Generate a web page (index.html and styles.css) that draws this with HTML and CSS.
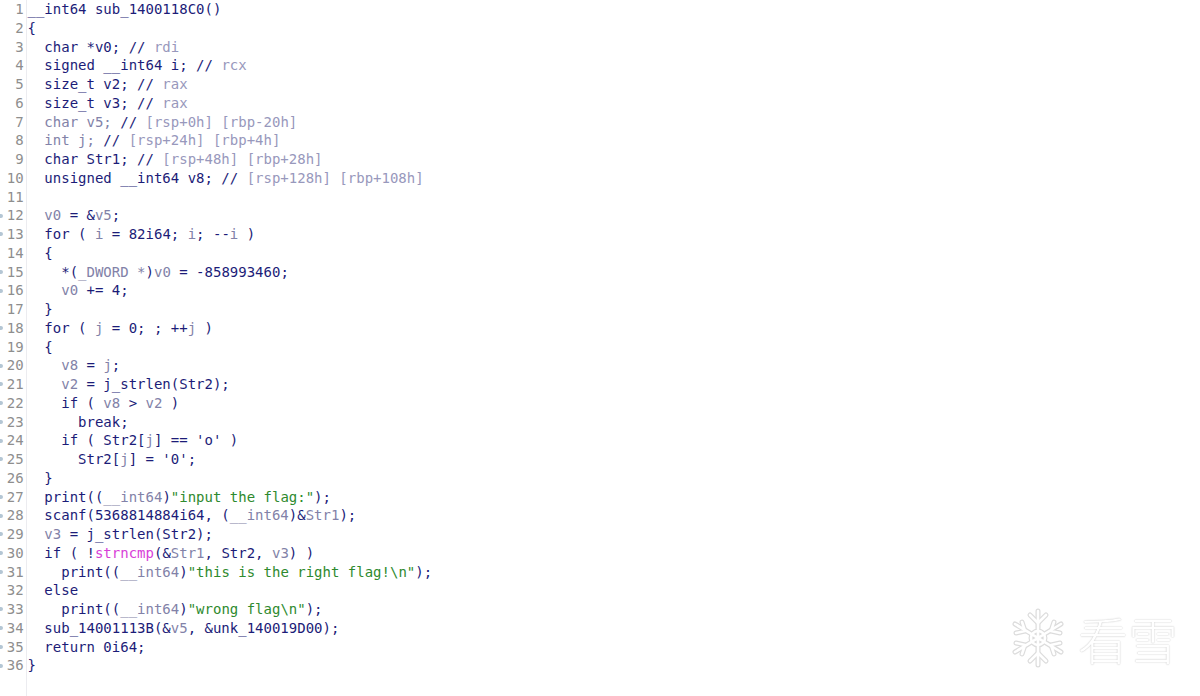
FILE: index.html
```html
<!DOCTYPE html>
<html>
<head>
<meta charset="utf-8">
<link rel="stylesheet" href="styles.css">
</head>
<body>
<div class="editor">
  <div class="gutter">
    <div class="g"><span class="mk"></span><span class="n">1</span></div>
    <div class="g"><span class="mk"></span><span class="n">2</span></div>
    <div class="g"><span class="mk"></span><span class="n">3</span></div>
    <div class="g"><span class="mk"></span><span class="n">4</span></div>
    <div class="g"><span class="mk"></span><span class="n">5</span></div>
    <div class="g"><span class="mk"></span><span class="n">6</span></div>
    <div class="g"><span class="mk"></span><span class="n">7</span></div>
    <div class="g"><span class="mk"></span><span class="n">8</span></div>
    <div class="g"><span class="mk"></span><span class="n">9</span></div>
    <div class="g"><span class="mk"></span><span class="n">10</span></div>
    <div class="g"><span class="mk"></span><span class="n">11</span></div>
    <div class="g"><span class="mk on"></span><span class="n">12</span></div>
    <div class="g"><span class="mk on"></span><span class="n">13</span></div>
    <div class="g"><span class="mk"></span><span class="n">14</span></div>
    <div class="g"><span class="mk on"></span><span class="n">15</span></div>
    <div class="g"><span class="mk on"></span><span class="n">16</span></div>
    <div class="g"><span class="mk"></span><span class="n">17</span></div>
    <div class="g"><span class="mk on"></span><span class="n">18</span></div>
    <div class="g"><span class="mk"></span><span class="n">19</span></div>
    <div class="g"><span class="mk on"></span><span class="n">20</span></div>
    <div class="g"><span class="mk on"></span><span class="n">21</span></div>
    <div class="g"><span class="mk on"></span><span class="n">22</span></div>
    <div class="g"><span class="mk on"></span><span class="n">23</span></div>
    <div class="g"><span class="mk on"></span><span class="n">24</span></div>
    <div class="g"><span class="mk on"></span><span class="n">25</span></div>
    <div class="g"><span class="mk"></span><span class="n">26</span></div>
    <div class="g"><span class="mk on"></span><span class="n">27</span></div>
    <div class="g"><span class="mk on"></span><span class="n">28</span></div>
    <div class="g"><span class="mk on"></span><span class="n">29</span></div>
    <div class="g"><span class="mk on"></span><span class="n">30</span></div>
    <div class="g"><span class="mk on"></span><span class="n">31</span></div>
    <div class="g"><span class="mk"></span><span class="n">32</span></div>
    <div class="g"><span class="mk on"></span><span class="n">33</span></div>
    <div class="g"><span class="mk on"></span><span class="n">34</span></div>
    <div class="g"><span class="mk on"></span><span class="n">35</span></div>
    <div class="g"><span class="mk on"></span><span class="n">36</span></div>
  </div>
  <div class="code">
<div class="l">__int64 sub_1400118C0()</div>
<div class="l">{</div>
<div class="l">  char *v0; // <span class="c">rdi</span></div>
<div class="l">  signed __int64 i; // <span class="c">rcx</span></div>
<div class="l">  size_t v2; // <span class="c">rax</span></div>
<div class="l">  size_t v3; // <span class="c">rax</span></div>
<div class="l">  <span class="v">char v5;</span> // <span class="c">[rsp+0h] [rbp-20h]</span></div>
<div class="l">  <span class="v">int j;</span> // <span class="c">[rsp+24h] [rbp+4h]</span></div>
<div class="l">  char Str1; // <span class="c">[rsp+48h] [rbp+28h]</span></div>
<div class="l">  unsigned __int64 v8; // <span class="c">[rsp+128h] [rbp+108h]</span></div>
<div class="l"> </div>
<div class="l">  <span class="v">v0</span> = &amp;<span class="v">v5</span>;</div>
<div class="l">  for ( <span class="v">i</span> = 82i64; <span class="v">i</span>; --<span class="v">i</span> )</div>
<div class="l">  {</div>
<div class="l">    *(<span class="v">_DWORD *</span>)<span class="v">v0</span> = -858993460;</div>
<div class="l">    <span class="v">v0</span> += 4;</div>
<div class="l">  }</div>
<div class="l">  for ( <span class="v">j</span> = 0; ; ++<span class="v">j</span> )</div>
<div class="l">  {</div>
<div class="l">    <span class="v">v8</span> = <span class="v">j</span>;</div>
<div class="l">    <span class="v">v2</span> = j_strlen(Str2);</div>
<div class="l">    if ( <span class="v">v8</span> &gt; <span class="v">v2</span> )</div>
<div class="l">      break;</div>
<div class="l">    if ( Str2[<span class="v">j</span>] == 'o' )</div>
<div class="l">      Str2[<span class="v">j</span>] = '0';</div>
<div class="l">  }</div>
<div class="l">  print((<span class="v">__int64</span>)<span class="s">"input the flag:"</span>);</div>
<div class="l">  scanf(5368814884i64, (<span class="v">__int64</span>)&amp;<span class="v">Str1</span>);</div>
<div class="l">  <span class="v">v3</span> = j_strlen(Str2);</div>
<div class="l">  if ( !<span class="f">strncmp</span>(&amp;<span class="v">Str1</span>, Str2, <span class="v">v3</span>) )</div>
<div class="l">    print((<span class="v">__int64</span>)<span class="s">"this is the right flag!\n"</span>);</div>
<div class="l">  else</div>
<div class="l">    print((<span class="v">__int64</span>)<span class="s">"wrong flag\n"</span>);</div>
<div class="l">  sub_14001113B(&amp;<span class="v">v5</span>, &amp;unk_140019D00);</div>
<div class="l">  return 0i64;</div>
<div class="l">}</div>
  </div>
</div>
<div class="wm">
  <svg class="flake" width="60" height="70" viewBox="0 0 60 70">
    <g fill="none" stroke-linecap="round" stroke-linejoin="round">
      <g stroke="#dcdcdc" stroke-width="5">
        <path d="M30 8 V62 M7 21 L53 49 M7 49 L53 21"/>
        <path d="M22 12 L30 20 L38 12 M22 58 L30 50 L38 58"/>
        <path d="M8 30 L17 28 L14 19 M52 30 L43 28 L46 19"/>
        <path d="M8 40 L17 42 L14 51 M52 40 L43 42 L46 51"/>
        <circle cx="30" cy="35" r="7"/>
      </g>
      <g stroke="#ffffff" stroke-width="2.6">
        <path d="M30 8 V62 M7 21 L53 49 M7 49 L53 21"/>
        <path d="M22 12 L30 20 L38 12 M22 58 L30 50 L38 58"/>
        <path d="M8 30 L17 28 L14 19 M52 30 L43 28 L46 19"/>
        <path d="M8 40 L17 42 L14 51 M52 40 L43 42 L46 51"/>
        <circle cx="30" cy="35" r="7"/>
      </g>
    </g>
  </svg>
  <span class="wm-text">看雪</span>
</div>
</body>
</html>
```
FILE: styles.css
```css
html, body {
  margin: 0;
  padding: 0;
  background: #ffffff;
}
body {
  width: 1200px;
  height: 696px;
  overflow: hidden;
  position: relative;
  font-family: "DejaVu Sans Mono", "Liberation Mono", monospace;
  font-size: 14px;
  line-height: 18.75px;
}
.editor {
  display: flex;
  align-items: stretch;
  min-height: 696px;
}
.gutter {
  display: flex;
  flex-direction: column;
  width: 26px;
  flex: none;
}
.g {
  display: flex;
  align-items: center;
  height: 18.75px;
}
.mk {
  width: 3px;
  height: 4px;
  margin-right: 3px;
  border-radius: 0 2px 2px 0;
}
.mk.on {
  background: #b4c6d4;
}
.n {
  width: 17.6px;
  text-align: right;
  color: #8e8e8e;
  white-space: pre;
}
.code {
  flex: 1;
  border-left: 1px solid #ececf0;
  padding-left: 0.5px;
  color: #1c1c78;
}
.l {
  white-space: pre;
  height: 18.75px;
}
.v { color: #8282a8; }
.c { color: #9898bc; }
.s { color: #2e8a2e; }
.f { color: #d83ed8; }
.wm {
  position: absolute;
  left: 1008px;
  top: 603px;
  display: flex;
  align-items: center;
  gap: 10px;
}
.wm-text {
  font-family: "Noto Sans CJK SC", sans-serif;
  font-size: 50px;
  line-height: 60px;
  font-weight: 300;
  color: #ffffff;
  text-shadow: 0 0 1px #c8c8c8, 0 0 2px #d8d8d8;
}
```
